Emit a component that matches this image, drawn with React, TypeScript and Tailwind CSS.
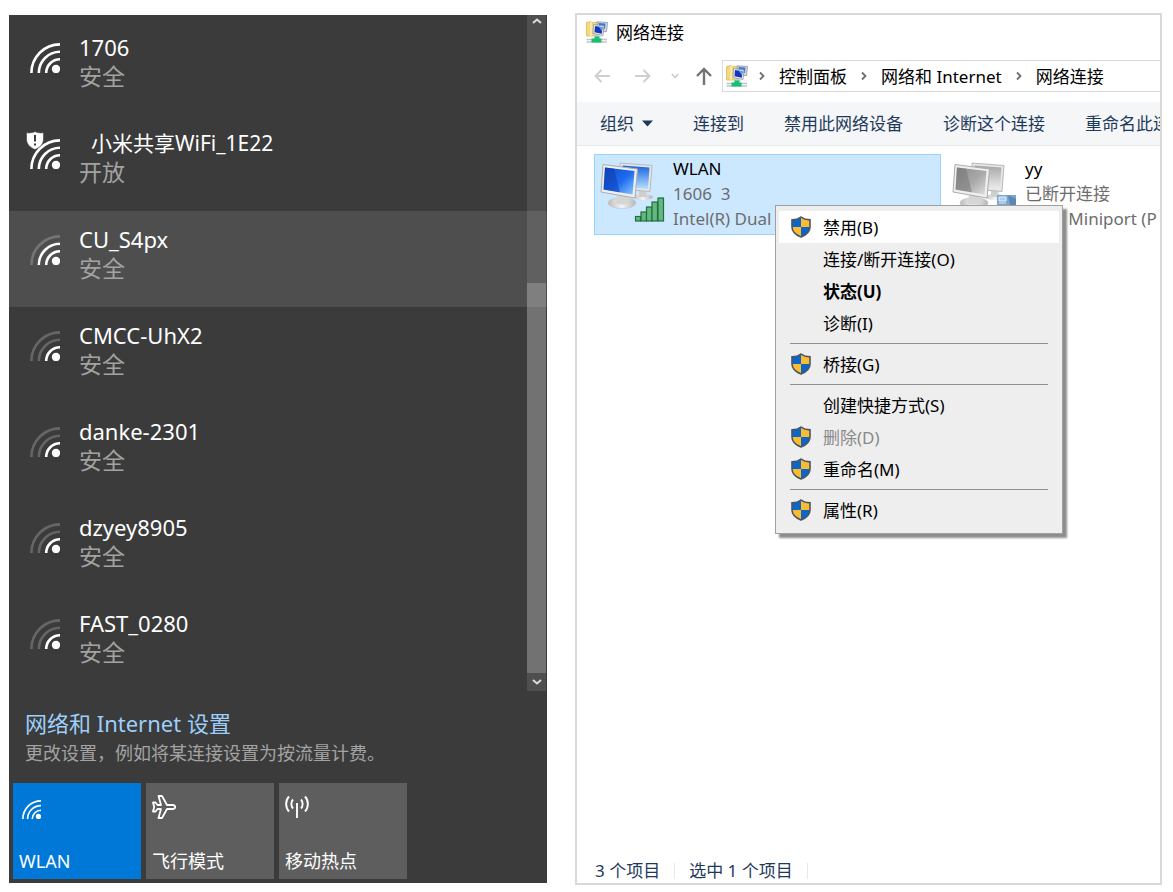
import React from 'react';

interface Wifi {
  name: string;
  status: string;
  level: number;
  open?: boolean;
  active?: boolean;
}

const networks: Wifi[] = [
  { name: '1706', status: '安全', level: 3 },
  { name: '小米共享WiFi_1E22', status: '开放', level: 3, open: true },
  { name: 'CU_S4px', status: '安全', level: 2, active: true },
  { name: 'CMCC-UhX2', status: '安全', level: 1 },
  { name: 'danke-2301', status: '安全', level: 1 },
  { name: 'dzyey8905', status: '安全', level: 1 },
  { name: 'FAST_0280', status: '安全', level: 1 },
];

interface MenuEntry {
  label: string;
  shield?: boolean;
  bold?: boolean;
  disabled?: boolean;
  hover?: boolean;
}

const menuGroups: MenuEntry[][] = [
  [
    { label: '禁用(B)', shield: true, hover: true },
    { label: '连接/断开连接(O)' },
    { label: '状态(U)', bold: true },
    { label: '诊断(I)' },
  ],
  [{ label: '桥接(G)', shield: true }],
  [
    { label: '创建快捷方式(S)' },
    { label: '删除(D)', shield: true, disabled: true },
    { label: '重命名(M)', shield: true },
  ],
  [{ label: '属性(R)', shield: true }],
];

const WifiIcon = ({ level, className }: { level: number; className: string }) => (
  <svg viewBox="0 0 30 30" className={className} fill="none" stroke="white" strokeWidth="2.6">
    <path d="M1.4 30A28.6 28.6 0 0 1 30 1.4" opacity={level > 2 ? 1 : 0.22} />
    <path d="M8.8 30A21.2 21.2 0 0 1 30 8.8" opacity={level > 1 ? 1 : 0.22} />
    <path d="M16.2 30A13.8 13.8 0 0 1 30 16.2" />
    <circle cx="26" cy="26" r="4.2" fill="white" stroke="none" />
  </svg>
);

const AlertShield = () => (
  <svg viewBox="0 0 18 19" className="absolute -left-1 -top-2 h-[19px] w-[18px]">
    <path d="M9 0.5C11.500 2 14.500 2 17.500 1.800V8C17.500 13 14 16.500 9 18.500C4 16.500 0.500 13 0.500 8V1.800C3.500 2 6.500 2 9 0.500Z" fill="white" stroke="#3c3c3c" strokeWidth="0.600" />
    <path d="M9 4V10.500M9 12.500V14.500" stroke="#3c3c3c" strokeWidth="2" />
  </svg>
);

const UacShield = () => (
  <svg viewBox="0 0 20 22" className="h-[22px] w-5">
    <path d="M10 1C7.500 3 4.500 3.800 1 3.900V11C1 15.500 5 19 10 21V1Z" fill="#0a66c8" />
    <path d="M10 1C12.500 3 15.500 3.800 19 3.900V11C19 15.500 15 19 10 21V1Z" fill="#fdbb2f" />
    <path d="M1 11H10V21C5 19 1 15.500 1 11Z" fill="#fdbb2f" />
    <path d="M19 11H10V21C15 19 19 15.500 19 11Z" fill="#0a66c8" />
    <path d="M10 1C7.500 3 4.500 3.800 1 3.900V11C1 15.500 5 19 10 21C15 19 19 15.500 19 11V3.900C15.500 3.800 12.500 3 10 1Z" fill="none" stroke="#4c5561" strokeWidth="1.600" />
  </svg>
);

const FolderNetIcon = () => (
  <svg viewBox="0 0 22 22" className="h-[22px] w-[22px] shrink-0">
    <path d="M0.500 1.500L5 0.500L6 1.500H12V15H0.500Z" fill="#f3d97c" stroke="#dcb95a" strokeWidth="0.800" />
    <path d="M5 1V15" stroke="#fbeeb4" strokeWidth="1.500" />
    <path d="M11 0.800L21.500 1.500L20.500 10.500L12 11Z" fill="#d8dde2" stroke="#8d949b" strokeWidth="0.800" />
    <path d="M12.500 2L19.500 2.500L19 8H13Z" fill="#3f79e0" />
    <path d="M7.500 3.500L18 5L17 14.500L7 12.500Z" fill="#eceff1" stroke="#8d949b" strokeWidth="0.800" />
    <path d="M9 5L16.500 6.200L15.800 12.700L8.500 11.300Z" fill="#1237b8" />
    <path d="M12.500 5.500L16.500 6.200L16 10.500Z" fill="#5d98f2" />
    <ellipse cx="11.500" cy="15" rx="4" ry="1" fill="#c7cdd2" />
    <path d="M0.500 18.500H21M0.500 21H21" stroke="#bfc5c8" strokeWidth="1.300" />
    <path d="M8.500 15.500H13.500V17.500H15.500V21.500H5.500V17.500H8.500Z" fill="#16bf72" />
  </svg>
);

const ConnectionIcon = ({ off }: { off?: boolean }) => {
  const id = off ? 'off' : 'on';
  return (
    <svg viewBox="0 0 66 62" className="h-[62px] w-[66px] shrink-0">
      <defs>
        <linearGradient id={`screen-${id}`} x1="0" y1="0" x2="1" y2="1">
          <stop offset="0" stopColor={off ? '#8d8d8d' : '#1249c4'} />
          <stop offset="0.550" stopColor={off ? '#a9a9a9' : '#1f6cf0'} />
          <stop offset="1" stopColor={off ? '#dedede' : '#8cc8ff'} />
        </linearGradient>
        <linearGradient id={`back-${id}`} x1="0" y1="0" x2="0" y2="1">
          <stop offset="0" stopColor={off ? '#a6a6a6' : '#1a62e0'} />
          <stop offset="1" stopColor={off ? '#ececec' : '#b4e0ff'} />
        </linearGradient>
        <linearGradient id={`base-${id}`} x1="0" y1="0" x2="1" y2="0">
          <stop offset="0" stopColor="#bdbdbd" />
          <stop offset="0.500" stopColor="#f4f4f4" />
          <stop offset="1" stopColor="#b5b5b5" />
        </linearGradient>
      </defs>
      <ellipse cx="43" cy="36" rx="10" ry="3" fill={`url(#base-${id})`} />
      <path d="M39 29H46L47 36H39Z" fill="#cfcfcf" />
      <path d="M20 2L52 4.500L50 30.500L21 28Z" fill="#e6e6e6" stroke="#b9b9b9" />
      <path d="M22.500 4.500L49.500 6.500L48 28L23 26Z" fill={`url(#back-${id})`} />
      <ellipse cx="22" cy="42" rx="14" ry="5.500" fill={`url(#base-${id})`} stroke="#c2c2c2" strokeWidth="0.600" />
      <path d="M17 34H28L29 42C25 44 19 44 16 42Z" fill="#d5d5d5" />
      <path d="M3 3.500L37.500 8L35 37L1 31Z" fill="#efefef" stroke="#adadad" />
      <path d="M5 6.500L34.500 10L32.500 33.500L3.500 28.500Z" fill={`url(#screen-${id})`} />
      <path d="M5 6.500L14 7.500L20 31.400L3.500 28.500Z" fill={off ? '#6f6f6f' : '#0c36a8'} opacity="0.450" />
      {off ? (
        <g>
          <rect x="45" y="34" width="19" height="16" fill="#7ba6cd" />
          <path d="M47 36H54V40H47ZM47 42H54" stroke="#e3f0fb" fill="#a9cdea" />
          <path d="M56 34L64 38V50L58 44Z" fill="#5a88b5" />
        </g>
      ) : (
        <g fill="#63b77f" stroke="#1f7040" strokeWidth="1.200">
          <rect x="35.500" y="55.500" width="5" height="4.500" />
          <rect x="41" y="51" width="5.500" height="9" />
          <rect x="46.500" y="46" width="5.500" height="14" />
          <rect x="52" y="41" width="5.500" height="19" />
          <rect x="58" y="37" width="5.500" height="23" />
        </g>
      )}
    </svg>
  );
};

const Chevron = () => (
  <svg viewBox="0 0 6 10" className="h-[10px] w-[6px] shrink-0" fill="none" stroke="#707070" strokeWidth="1.800">
    <path d="M1 1.500L4.500 5L1 8.500" />
  </svg>
);

const WifiPanel = () => (
  <section className="flex min-w-0 flex-1 flex-col bg-[#3b3b3b] text-white">
    <div className="relative pt-1">
      {networks.map((n) => (
        <button
          key={n.name}
          className={`flex h-24 w-full items-start gap-[19px] pl-[21px] pt-[13px] text-left ${n.active ? 'bg-[#4e4e4e]' : ''}`}
        >
          <span className="relative mt-[11px] shrink-0">
            <WifiIcon level={n.level} className="h-[30px] w-[30px]" />
            {n.open && <AlertShield />}
          </span>
          <span className="flex flex-col leading-[30px]">
            <span className={n.open ? 'pl-3 text-[21px]' : 'text-[22px]'}>{n.name}</span>
            <span className="text-[23px] leading-7 text-[#a3a3a3]">{n.status}</span>
          </span>
        </button>
      ))}

      {/* 滚动条 */}
      <div className="absolute inset-y-0 right-px flex w-[19px] flex-col items-center bg-white/10">
        <svg viewBox="0 0 10 6" className="my-[3px] h-[6px] w-[10px]" fill="none" stroke="#dcdcdc" strokeWidth="2">
          <path d="M1 5L5 1.500L9 5" />
        </svg>
        <div className="flex-[256]" />
        <div className="w-full flex-[390] bg-white/20" />
        <svg viewBox="0 0 10 6" className="my-[6px] h-[6px] w-[10px]" fill="none" stroke="#dcdcdc" strokeWidth="2">
          <path d="M1 1L5 4.500L9 1" />
        </svg>
      </div>
    </div>

    <div className="px-4 pb-[15px] pt-[17px] leading-[30px]">
      <a href="#settings" className="block text-[22px] text-[#9dcffa]">网络和 Internet 设置</a>
      <p className="text-[18px] text-[#a3a3a3]">更改设置，例如将某连接设置为按流量计费。</p>
    </div>

    <div className="flex gap-[5px] px-1 pb-1 text-[18px]">
      <button className="flex h-24 w-32 flex-col items-start justify-between bg-[#0078d7] px-[6px] pb-[5px] pt-[17px]">
        <WifiIcon level={3} className="ml-[3px] h-[19px] w-[19px]" />
        <span className="leading-[26px]">WLAN</span>
      </button>
      <button className="flex h-24 w-32 flex-col items-start justify-between bg-[#5e5e5e] px-[6px] pb-[5px] pt-3">
        <svg viewBox="0 0 24 24" className="h-6 w-6" fill="none" stroke="white" strokeWidth="1.800" strokeLinejoin="round">
          <path d="M1 7.500H3.500L5.500 10H9L6.500 1H10L15 10H21C24 10.500 24 13.500 21 14H15L10 23H6.500L9 14H5.500L3.500 16.500H1L2.200 12Z" />
        </svg>
        <span className="leading-[26px]">飞行模式</span>
      </button>
      <button className="flex h-24 w-32 flex-col items-start justify-between bg-[#5e5e5e] px-[6px] pb-[5px] pt-3">
        <svg viewBox="0 0 24 24" className="h-6 w-6" fill="none" stroke="white" strokeWidth="1.900">
          <path d="M12 8V23" />
          <path d="M8 4.500C5.800 7 5.800 11 8 13.500M16 4.500C18.200 7 18.200 11 16 13.500" />
          <path d="M4 1.500C0.200 5.500 0.200 12.500 4 16.500M20 1.500C23.800 5.500 23.800 12.500 20 16.500" />
        </svg>
        <span className="leading-[26px]">移动热点</span>
      </button>
    </div>
  </section>
);

const ContextMenu = () => (
  <div
    role="menu"
    className="absolute left-[198px] top-[59px] w-72 border border-[#a0a0a0] bg-[#eeeeee] px-[3px] pb-[7px] pt-[5px] text-black shadow-[4px_4px_2px_rgba(0,0,0,0.45)]"
  >
    {menuGroups.map((group, i) => (
      <React.Fragment key={i}>
        {i > 0 && (
          <div className="flex h-[9px] items-center px-[11px]">
            <hr className="w-full border-[#919191]" />
          </div>
        )}
        {group.map((m) => (
          <button
            key={m.label}
            role="menuitem"
            disabled={m.disabled}
            className={`flex h-8 w-full items-center gap-3 pl-3 text-left ${m.hover ? 'bg-white' : ''} ${m.bold ? 'font-bold' : ''} ${m.disabled ? 'text-[#8a8a8a]' : ''}`}
          >
            <span className="w-5">{m.shield && <UacShield />}</span>
            {m.label}
          </button>
        ))}
      </React.Fragment>
    ))}
  </div>
);

const ExplorerWindow = () => (
  <section className="flex min-w-0 flex-[583] flex-col overflow-hidden whitespace-nowrap border-2 border-[#d9d9d9] bg-white text-[17px] leading-[25px] text-black">
    <header className="flex h-[34px] items-center gap-2 pl-[9px]">
      <FolderNetIcon />
      <h1>网络连接</h1>
    </header>

    <nav className="flex items-center pb-[10px] pt-[11px]">
      <div className="flex w-[145px] shrink-0 items-center pl-[17px]">
        <button aria-label="后退">
          <svg viewBox="0 0 16 14" className="h-[14px] w-4" fill="none" stroke="#cfcfcf" strokeWidth="2">
            <path d="M16 7H1.500M7.500 1L1.500 7L7.500 13" />
          </svg>
        </button>
        <button aria-label="前进" className="ml-[25px]">
          <svg viewBox="0 0 16 14" className="h-[14px] w-4" fill="none" stroke="#cfcfcf" strokeWidth="2">
            <path d="M0 7H14.500M8.500 1L14.500 7L8.500 13" />
          </svg>
        </button>
        <button aria-label="最近" className="ml-5">
          <svg viewBox="0 0 8 6" className="h-[6px] w-2" fill="none" stroke="#cfcfcf" strokeWidth="1.800">
            <path d="M0.800 1L4 4.500L7.200 1" />
          </svg>
        </button>
        <button aria-label="上移" className="ml-[17px]">
          <svg viewBox="0 0 16 18" className="h-[18px] w-4" fill="none" stroke="#737373" strokeWidth="2.400">
            <path d="M8 18V2M1 9L8 2L15 9" />
          </svg>
        </button>
      </div>
      <div className="flex h-8 flex-1 items-center border border-r-0 border-[#d9d9d9] pl-[3px]">
        <FolderNetIcon />
        <span className="ml-[11px]"><Chevron /></span>
        <a href="#panel" className="mx-[14px]">控制面板</a>
        <Chevron />
        <a href="#internet" className="mx-[14px]">网络和 Internet</a>
        <Chevron />
        <a href="#connections" className="mx-[14px]">网络连接</a>
      </div>
    </nav>

    <div className="flex h-11 items-center gap-10 border-b border-[#e8e8e8] bg-[#f5f6f7] pl-[23px] text-[#1e395b]">
      <button className="flex items-center gap-2">
        组织
        <svg viewBox="0 0 11 7" className="h-[7px] w-[11px]" fill="#1e395b"><path d="M0 0.500H11L5.500 6.500Z" /></svg>
      </button>
      <button>连接到</button>
      <button>禁用此网络设备</button>
      <button>诊断这个连接</button>
      <button>重命名此连接</button>
    </div>

    <main className="relative flex-1 pl-[17px] pt-2">
      <div className="flex gap-[5px]">
        <div className="flex h-[81px] w-[347px] shrink-0 gap-[7px] border border-[#99d1ff] bg-[#cce8ff] pl-[5px] pt-px">
          <span className="pt-[5px]"><ConnectionIcon /></span>
          <div className="text-[#6d6d6d]">
            <p className="text-black">WLAN</p>
            <p className="whitespace-pre">1606  3</p>
            <p>Intel(R) Dual</p>
          </div>
        </div>
        <div className="flex h-[81px] gap-[7px] border border-transparent pl-[5px] pt-px">
          <span className="pt-[5px]"><ConnectionIcon off /></span>
          <div className="text-[#6d6d6d]">
            <p className="text-black">yy</p>
            <p>已断开连接</p>
            <p>WAN Miniport (P</p>
          </div>
        </div>
      </div>
      <ContextMenu />
    </main>

    <footer className="flex h-6 items-center text-[#1e395b]">
      <span className="border-r border-[#e8e8e8] pl-[18px] pr-[14px] leading-4">3 个项目</span>
      <span className="border-r border-[#e8e8e8] px-[14px] leading-4">选中 1 个项目</span>
    </footer>
  </section>
);

export default function App() {
  return (
    <div className="flex gap-7 bg-white pb-[7px] pl-[9px] pr-[11px] pt-[13px] font-['Noto_Sans','Noto_Sans_CJK_SC',sans-serif]">
      <div className="flex min-w-0 flex-[538] py-[2px]">
        <WifiPanel />
      </div>
      <ExplorerWindow />
    </div>
  );
}
